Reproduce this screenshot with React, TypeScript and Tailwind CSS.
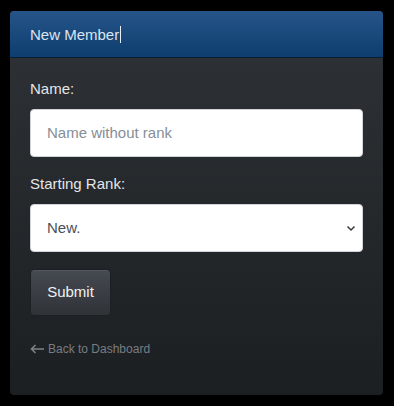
import React from "react";

export default function App() {
  return (
    <div className="w-[394px] h-[406px] bg-black pt-[11px] pl-[10px]" style={{ fontFamily: '"Liberation Sans", Arial, sans-serif' }}>
      <div className="w-[373px] h-[384px] rounded-[4px] overflow-hidden bg-gradient-to-b from-[#2f3236] to-[#1c1f22] flex flex-col">
        <div className="h-[47px] shrink-0 px-5 flex items-center bg-gradient-to-b from-[#265489] to-[#0c3e6f] border-b border-[#0b1d30]">
          <span className="text-[15px] text-[#dbe5f0] leading-none">New Member</span>
          <span className="w-px h-[17px] bg-[#e8eef5] ml-[1px]"></span>
        </div>
        <div className="px-5 pt-[20px] flex flex-col">
          <label className="text-[15px] leading-[22px] text-[#e4e6e8] mb-[9px]">Name:</label>
          <div className="h-[48px] w-[333px] bg-white rounded-[4px] border border-[#ced4da] flex items-center pl-[16px]">
            <span className="text-[15px] text-[#868e96]">Name without rank</span>
          </div>
          <label className="text-[15px] leading-[22px] text-[#e4e6e8] mt-[16px] mb-[9px]">Starting Rank:</label>
          <div className="h-[48px] w-[333px] bg-white rounded-[4px] border border-[#ced4da] flex items-center pl-[16px] pr-[5px]">
            <span className="text-[15px] text-[#495057] flex-1">New.</span>
            <svg width="10" height="8" viewBox="0 0 10 8" className="mr-[1px]">
              <path d="M1.5 2.5 L5 6 L8.5 2.5" fill="none" stroke="#343a40" strokeWidth="1.5" />
            </svg>
          </div>
          <div className="mt-[17px]">
            <button className="h-[47px] w-[81px] rounded-[4px] border border-[#1c1f23] bg-gradient-to-b from-[#464a51] to-[#2f3237] text-[15px] text-[#f1f2f3] shadow-[inset_0_1px_0_rgba(255,255,255,0.08)]">
              Submit
            </button>
          </div>
          <div className="mt-[24px] flex items-center text-[12px] leading-[18px] text-[#787d83]">
            <svg width="15" height="10" viewBox="0 0 15 10" className="mr-[3px] ml-[0px]">
              <path d="M14 5 H1.5 M5.5 1 L1.5 5 L5.5 9" fill="none" stroke="#7d8288" strokeWidth="1.6" />
            </svg>
            <span>Back to Dashboard</span>
          </div>
        </div>
      </div>
    </div>
  );
}
